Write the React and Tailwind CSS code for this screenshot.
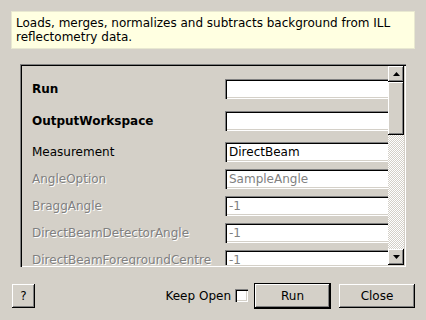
import React from 'react';

const sunken = "shadow-[inset_1px_1px_0_#808080,inset_2px_2px_0_#000,inset_-1px_-1px_0_#fff,inset_-2px_-2px_0_#d4d0c8]";
const raised = "shadow-[inset_-1px_-1px_0_#000,inset_1px_1px_0_#fff,inset_-2px_-2px_0_#808080]";

const rows = [
    { label: "Run", value: "", bold: true, h: "h-[32px]" },
    { label: "OutputWorkspace", value: "", bold: true, h: "h-[31px]" },
    { label: "Measurement", value: "DirectBeam", h: "h-[27px]" },
    { label: "AngleOption", value: "SampleAngle", disabled: true, h: "h-[27px]" },
    { label: "BraggAngle", value: "-1", disabled: true, h: "h-[27px]" },
    { label: "DirectBeamDetectorAngle", value: "-1", disabled: true, h: "h-[27px]" },
    { label: "DirectBeamForegroundCentre", value: "-1", disabled: true, h: "h-[27px]" },
];

function Arrow({ down }) {
    return (
        <svg width="7" height="4" viewBox="0 0 7 4">
            <path d={down ? "M0 0h7L3.5 4z" : "M3.5 0L7 4H0z"} fill="#000" />
        </svg>
    );
}

function PropertyRow({ label, value, bold, disabled, h }) {
    return (
        <div className={`${h} flex items-start shrink-0`}>
            <div
                className={`w-[203px] shrink-0 h-[20px] flex items-center pl-[10px] whitespace-nowrap ${bold ? "font-bold" : ""} ${disabled ? "text-[#808080] [text-shadow:1px_1px_0_#fff]" : "text-black"}`}
            >
                {label}
            </div>
            <div className={`relative w-[172px] h-[20px] shrink-0 bg-white ${sunken} flex items-center pl-[4px] ${disabled ? "text-[#808080]" : "text-black"}`}>
                {value}
            </div>
        </div>
    );
}

export default function App() {
    return (
        <div className="w-[426px] h-[320px] bg-[#d4d0c8] flex flex-col pt-[11px] text-[12px] leading-[14px] text-black overflow-hidden font-['DejaVu_Sans',sans-serif]">
            <div className="mx-[11px] h-[38px] bg-[#ffffe1] border border-[#e8e8d0] px-[4px] pt-[4px]">
                Loads, merges, normalizes and subtracts background from ILL<br />reflectometry data.
            </div>

            <div className={`mt-[15px] ml-[20px] w-[386px] h-[203px] p-[2px] flex ${sunken}`}>
                <div className="w-[366px] shrink-0 h-full overflow-hidden flex flex-col pt-[13px]">
                    {rows.map((r) => (
                        <PropertyRow key={r.label} {...r} />
                    ))}
                </div>
                <div className="w-[16px] shrink-0 h-full flex flex-col">
                    <div className={`h-[16px] shrink-0 bg-[#d4d0c8] ${raised} flex items-center justify-center`}>
                        <Arrow />
                    </div>
                    <div className={`h-[53px] shrink-0 bg-[#d4d0c8] ${raised}`}></div>
                    <div className="flex-1 bg-[conic-gradient(#fff_25%,#d4d0c8_0_50%,#fff_0_75%,#d4d0c8_0)] bg-[length:2px_2px]"></div>
                    <div className={`h-[16px] shrink-0 bg-[#d4d0c8] ${raised} flex items-center justify-center`}>
                        <Arrow down />
                    </div>
                </div>
            </div>

            <div className="mt-[16px] h-[25px] flex items-center pl-[12px] pr-[11px]">
                <button className={`w-[23px] h-[24px] bg-[#d4d0c8] ${raised} flex items-center justify-center`}>?</button>
                <div className="flex-1"></div>
                <span className="mr-[4px]">Keep Open</span>
                <div className={`w-[13px] h-[13px] bg-white ${sunken} mr-[6px]`}></div>
                <button className="w-[77px] h-[26px] bg-[#d4d0c8] border border-black shadow-[inset_-1px_-1px_0_#000,inset_1px_1px_0_#fff,inset_-2px_-2px_0_#808080] flex items-center justify-center">
                    Run
                </button>
                <button className={`ml-[8px] w-[76px] h-[24px] bg-[#d4d0c8] ${raised} flex items-center justify-center`}>
                    Close
                </button>
            </div>
        </div>
    );
}
